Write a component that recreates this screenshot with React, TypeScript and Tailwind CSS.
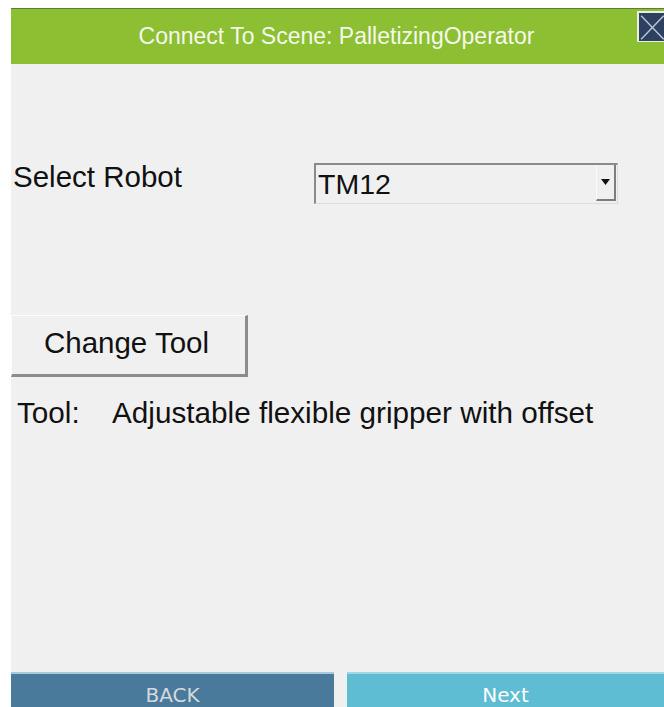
import React from "react";

const font = { fontFamily: '"Liberation Sans", Arial, sans-serif' };

function CloseBox() {
  return (
    <button className="absolute right-0 top-[2px] h-[31px] w-[27px] border-l-2 border-t-2 border-b border-[#e8eee0] bg-[#2e4060]">
      <svg viewBox="0 0 27 31" className="h-full w-full">
        <path d="M2 3 L27 29 M2 29 L27 3" stroke="#b8c4d4" strokeWidth="1.6" />
      </svg>
    </button>
  );
}

function RobotSelect() {
  return (
    <div className="flex h-[41px] w-[304px] border-l-2 border-t-2 border-[#8a8a8a] border-r border-b border-r-[#dcdcdc] border-b-[#dcdcdc] bg-[#f0f0f0]">
      <span className="flex-1 pl-[2px] text-[28.5px] leading-[38px] text-[#111]">TM12</span>
      <div className="mb-[2px] mr-[1px] flex w-[20px] items-center justify-center border-l border-[#fafafa] border-r-2 border-b-2 border-r-[#7d7d7d] border-b-[#7d7d7d]">
        <svg width="9" height="6" viewBox="0 0 9 6">
          <path d="M0 0 H9 L4.5 6 Z" fill="#111" />
        </svg>
      </div>
    </div>
  );
}

export default function App() {
  return (
    <div className="flex h-[707px] w-[664px] flex-col bg-white pl-[11px] pt-[8px]" style={font}>
      {/* title bar */}
      <div className="relative flex h-[56px] items-center justify-center border-t border-[#5d7a3a] bg-[#8cbf31]">
        <span className="pr-[2px] text-[23px] text-[#f4f8ec]">Connect To Scene: PalletizingOperator</span>
        <CloseBox />
      </div>

      {/* body */}
      <div className="flex flex-1 flex-col bg-[#f0f0f0]">
        <div className="mt-[99px] flex items-start">
          <span className="ml-[2px] w-[301px] text-[29.5px] leading-[28px] text-[#111]">Select Robot</span>
          <RobotSelect />
        </div>

        <button className="mt-[111px] flex h-[62px] w-[237px] items-center justify-center border-l border-t border-[#fdfdfd] border-r-[3px] border-b-[3px] border-r-[#8c8c8c] border-b-[#8c8c8c] bg-[#f0f0f0] pb-[3px] pr-[4px] text-[29.5px] text-[#111]">
          Change Tool
        </button>

        <div className="mt-[19px] flex text-[29.7px] leading-[34px] text-[#111]">
          <span className="ml-[6px] w-[95px]">Tool:</span>
          <span>Adjustable flexible gripper with offset</span>
        </div>

        {/* footer buttons */}
        <div className="mt-auto flex h-[35px] gap-[13px]">
          <button
            className="flex w-[323px] justify-center border-t-2 border-[#a8c8dc] bg-[#49799b] pt-[6px] text-[20px] text-[#d4d9de]"
            style={{ fontFamily: '"DejaVu Sans", sans-serif' }}
          >
            BACK
          </button>
          <button
            className="flex flex-1 justify-center border-t-2 border-[#9ed8e6] bg-[#5ebdd2] pt-[6px] text-[20px] text-white"
            style={{ fontFamily: '"DejaVu Sans", sans-serif' }}
          >
            Next
          </button>
        </div>
      </div>
    </div>
  );
}
